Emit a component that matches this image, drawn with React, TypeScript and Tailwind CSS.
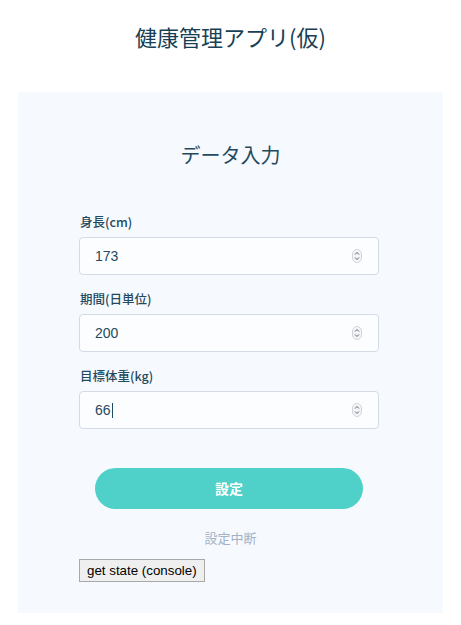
import React from "react";

const fields = [
  { label: "身長(cm)", value: "173" },
  { label: "期間(日単位)", value: "200" },
  { label: "目標体重(kg)", value: "66", caret: true },
];

const Spinner = () => (
  <svg width="10" height="14" viewBox="0 0 10 14" className="shrink-0">
    <rect x="0.5" y="0.5" width="9" height="13" rx="4.5" fill="#f3f4f6" stroke="#d1d5db" />
    <path d="M3 5.5 L5 3.5 L7 5.5" fill="none" stroke="#4b5563" strokeWidth="0.9" />
    <path d="M3 8.5 L5 10.5 L7 8.5" fill="none" stroke="#4b5563" strokeWidth="0.9" />
  </svg>
);

const App = () => {
  return (
    <div
      className="min-h-[625px] w-full bg-white pt-[20px]"
      style={{ fontFamily: '"Noto Sans CJK JP", "Noto Sans", sans-serif' }}
    >
      <h1 className="text-center text-[22px] leading-[32px] font-normal text-[#173f55]">
        健康管理アプリ(仮)
      </h1>

      <div className="mx-[18px] mt-[40px] bg-[#f6f9fe] pt-[49px] pb-[31px]">
        <h2 className="text-center text-[20px] leading-[28px] text-[#1f4a60]">データ入力</h2>

        <div className="mt-[44px] flex flex-col gap-[15px] px-[61px]">
          {fields.map((f) => (
            <div key={f.label} className="flex flex-col">
              <label className="ml-[1px] text-[12.5px] leading-[18px] font-medium text-[#1f4a60]">{f.label}</label>
              <div className="mt-[6px] flex h-[38px] w-[300px] items-center justify-between rounded-[4px] border border-[#d4dbe6] bg-[#fcfdfe] pl-[15px] pr-[16px]">
                <span
                  className="flex items-center text-[14px] text-[#1f4a60]"
                  style={{ fontFamily: '"Liberation Sans", Arial, sans-serif' }}
                >
                  {f.value}
                  {f.caret && <span className="ml-[1px] inline-block h-[15px] w-px bg-[#1f4a60]" />}
                </span>
                <Spinner />
              </div>
            </div>
          ))}
        </div>

        <div className="mt-[39px] flex justify-center pl-[1px] pr-[4px]">
          <button className="h-[41px] w-[268px] rounded-full bg-[#4fd1c9] text-[14px] font-bold text-white">
            設定
          </button>
        </div>

        <p className="mt-[20px] text-center text-[13px] leading-[18px] text-[#a3b1c6]">設定中断</p>

        <div className="mt-[9px] px-[61px]">
          <button
            className="border border-[#a8a8a8] bg-[#efefef] px-[7px] py-[2px] text-[13.33px] leading-[17px] text-black"
            style={{ fontFamily: '"Liberation Sans", Arial, sans-serif' }}
          >
            get state (console)
          </button>
        </div>
      </div>
    </div>
  );
};

export default App;
